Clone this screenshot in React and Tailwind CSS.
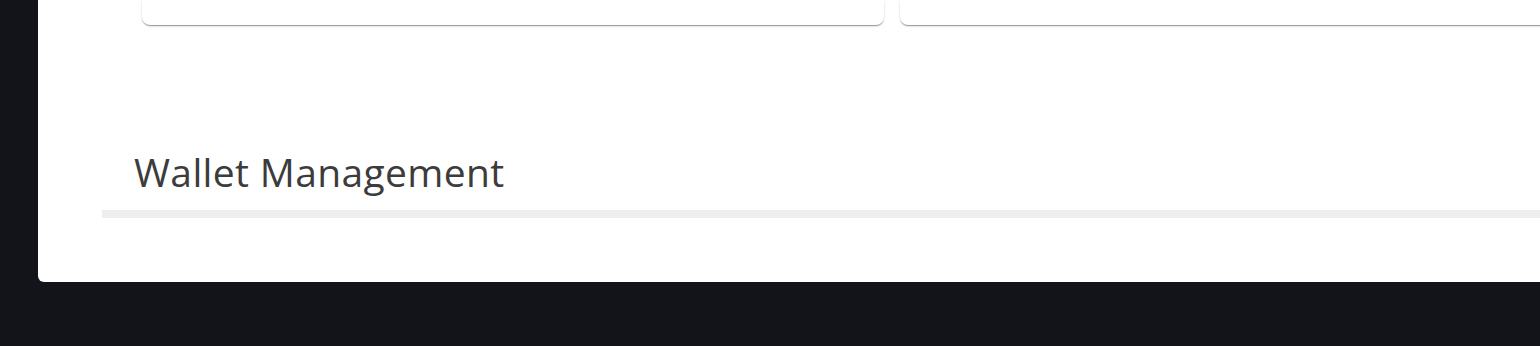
export default function App() {
  return (
    <div className="h-[346px] w-[1540px] overflow-hidden bg-[#131419] pl-[38px]">
      <div className="flex h-[282px] flex-col overflow-hidden rounded-bl-[6px] bg-white">
        <div className="flex h-[28px] gap-[16px] pl-[104px]">
          <div className="h-[25px] w-[742px] shrink-0 rounded-b-[8px] bg-white shadow-[0_2px_1px_-1px_rgba(0,0,0,0.25),0_1px_1px_0_rgba(0,0,0,0.14),0_1px_3px_0_rgba(0,0,0,0.12)]" />
          <div className="h-[25px] w-[742px] shrink-0 rounded-b-[8px] bg-white shadow-[0_2px_1px_-1px_rgba(0,0,0,0.25),0_1px_1px_0_rgba(0,0,0,0.14),0_1px_3px_0_rgba(0,0,0,0.12)]" />
        </div>
        <div className="mt-[121px] pl-[64px]">
          <h2 className="pl-[32px] font-['Open_Sans',sans-serif] text-[39px] font-normal leading-[46px] tracking-[0.35px] text-[#3c3c3c]">
            Wallet Management
          </h2>
          <div className="mt-[15px] h-[8px] bg-[#eeeeee]" />
        </div>
      </div>
    </div>
  );
}
